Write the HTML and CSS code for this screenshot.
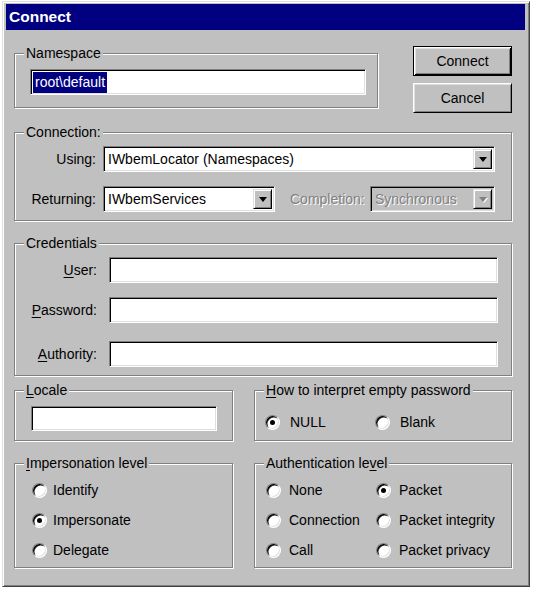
FILE: index.html
```html
<!DOCTYPE html>
<html>
<head>
<meta charset="utf-8">
<title>Connect</title>
<link rel="stylesheet" href="styles.css">
</head>
<body>
<div class="window">
  <div class="titlebar">Connect</div>
  <div class="content">
    <div class="row1">
      <div class="group ns">
        <div class="legend">Namespace</div>
        <div class="ns-body">
          <div class="textbox ns-box"><span class="sel">root\default</span></div>
        </div>
      </div>
      <div class="buttons">
        <div class="btn default">Connect</div>
        <div class="btn">Cancel</div>
      </div>
    </div>

    <div class="group conn">
      <div class="legend">Connection:</div>
      <div class="conn-body">
        <div class="frow">
          <span class="flabel">Using:</span>
          <div class="combo using"><span class="ctext">IWbemLocator (Namespaces)</span><span class="drop"><i class="arrow"></i></span></div>
        </div>
        <div class="frow">
          <span class="flabel">Returning:</span>
          <div class="combo returning"><span class="ctext">IWbemServices</span><span class="drop"><i class="arrow"></i></span></div>
          <span class="dislabel">Completion:</span>
          <div class="combo disabled completion"><span class="ctext">Synchronous</span><span class="drop"><i class="arrow"></i></span></div>
        </div>
      </div>
    </div>

    <div class="group cred">
      <div class="legend">Credentials</div>
      <div class="cred-body">
        <div class="frow r-user">
          <span class="clabel"><u>U</u>ser:</span>
          <div class="textbox cbox"></div>
        </div>
        <div class="frow r-pass">
          <span class="clabel"><u>P</u>assword:</span>
          <div class="textbox cbox"></div>
        </div>
        <div class="frow r-auth">
          <span class="clabel"><u>A</u>uthority:</span>
          <div class="textbox cbox"></div>
        </div>
      </div>
    </div>

    <div class="pair row4">
      <div class="group left">
        <div class="legend"><u>L</u>ocale</div>
        <div class="locale-body">
          <div class="textbox locale-box"></div>
        </div>
      </div>
      <div class="group right">
        <div class="legend"><u>H</u>ow to interpret empty password</div>
        <div class="how-body">
          <div class="radio"><span class="rb checked"></span><span>NULL</span></div>
          <div class="radio"><span class="rb"></span><span>Blank</span></div>
        </div>
      </div>
    </div>

    <div class="pair row5">
      <div class="group left">
        <div class="legend"><u>I</u>mpersonation level</div>
        <div class="imp-body">
          <div class="radio"><span class="rb"></span><span>Identify</span></div>
          <div class="radio"><span class="rb checked"></span><span>Impersonate</span></div>
          <div class="radio"><span class="rb"></span><span>Delegate</span></div>
        </div>
      </div>
      <div class="group right">
        <div class="legend">Authentication le<u>v</u>el</div>
        <div class="auth-body">
          <div class="radio"><span class="rb"></span><span>None</span></div>
          <div class="radio"><span class="rb checked"></span><span>Packet</span></div>
          <div class="radio"><span class="rb"></span><span>Connection</span></div>
          <div class="radio"><span class="rb"></span><span>Packet integrity</span></div>
          <div class="radio"><span class="rb"></span><span>Call</span></div>
          <div class="radio"><span class="rb"></span><span>Packet privacy</span></div>
        </div>
      </div>
    </div>
  </div>
</div>
</body>
</html>
```
FILE: styles.css
```css
* { box-sizing: border-box; }

body {
  margin: 0;
  background: #fff;
  font-family: "Liberation Sans", Arial, sans-serif;
  font-size: 14px;
  line-height: 16px;
  color: #000;
}

u { text-decoration: underline; text-underline-offset: 2px; }

.window {
  margin: 1px 0 0 2px;
  width: 528px;
  height: 586px;
  background: #c0c0c0;
  border: 1px solid;
  border-color: #dfdfdf #404040 #404040 #dfdfdf;
  box-shadow: inset 1px 1px 0 #fff, inset -1px -1px 0 #808080;
  padding: 2px 4px 0 3px;
}

.titlebar {
  height: 26px;
  line-height: 26px;
  background: #000080;
  color: #fff;
  font-weight: bold;
  font-size: 15.5px;
  padding-left: 3px;
}

.content {
  padding: 0 13px 0 8px;
}

/* group boxes (etched frame with caption) */
.group {
  border: 1px solid #808080;
  box-shadow: inset 1px 1px 0 #fff, 1px 1px 0 #fff;
}

.legend {
  width: fit-content;
  margin: -9px 0 0 9px;
  padding: 0 2px;
  height: 16px;
  line-height: 16px;
  background: #c0c0c0;
  white-space: nowrap;
}

/* sunken text box */
.textbox {
  background: #fff;
  border: 1px solid;
  border-color: #808080 #fff #fff #808080;
  box-shadow: inset 1px 1px 0 #000, inset -1px -1px 0 #dfdfdf;
}

/* row 1 */
.row1 {
  display: flex;
  align-items: flex-start;
  margin-top: 16px;
}

.ns {
  width: 364px;
  margin-top: 7px;
}

.ns-body {
  padding: 8px 0 12px 15px;
}

.ns-box {
  width: 336px;
  height: 26px;
  display: flex;
  align-items: center;
  padding-left: 2px;
}

.sel {
  background: #000080;
  color: #fff;
  line-height: 21px;
  height: 21px;
  padding: 0 2px;
}

.buttons {
  margin-left: auto;
  width: 99px;
  display: flex;
  flex-direction: column;
  gap: 7px;
}

.btn {
  height: 30px;
  display: flex;
  align-items: center;
  justify-content: center;
  background: #c0c0c0;
  border: 1px solid;
  border-color: #fff #000 #000 #fff;
  box-shadow: inset 1px 1px 0 #dfdfdf, inset -1px -1px 0 #808080;
}

.btn.default {
  border: 1px solid #000;
  box-shadow: inset 1px 1px 0 #fff, inset -1px -1px 0 #000, inset 2px 2px 0 #dfdfdf, inset -2px -2px 0 #808080;
}

/* connection */
.conn {
  margin-top: 19px;
}

.conn-body {
  padding: 6px 0 8px 0;
  display: flex;
  flex-direction: column;
  gap: 14px;
}

.frow {
  display: flex;
  align-items: center;
}

.flabel {
  width: 81px;
  text-align: right;
  margin-right: 7px;
  white-space: nowrap;
}

.combo {
  height: 26px;
  display: flex;
  align-items: center;
  background: #fff;
  border: 1px solid;
  border-color: #808080 #fff #fff #808080;
  box-shadow: inset 1px 1px 0 #000, inset -1px -1px 0 #dfdfdf;
  padding: 2px;
}

.ctext {
  flex: 1;
  padding-left: 2px;
  white-space: nowrap;
  overflow: hidden;
}

.drop {
  width: 19px;
  height: 100%;
  display: flex;
  align-items: center;
  justify-content: center;
  background: #c0c0c0;
  border: 1px solid;
  border-color: #dfdfdf #000 #000 #dfdfdf;
  box-shadow: inset 1px 1px 0 #fff, inset -1px -1px 0 #808080;
}

.arrow {
  display: block;
  width: 0;
  height: 0;
  border-left: 4px solid transparent;
  border-right: 4px solid transparent;
  border-top: 5px solid #000;
  margin-top: 1px;
}

.using { width: 392px; }
.returning { width: 172px; }
.completion { width: 125px; }

.dislabel {
  margin-left: 15px;
  width: 80px;
  color: #808080;
  text-shadow: 1px 1px 0 #fff;
  white-space: nowrap;
}

.combo.disabled {
  background: #c0c0c0;
}

.combo.disabled .ctext {
  color: #808080;
  text-shadow: 1px 1px 0 #fff;
}

.combo.disabled .arrow {
  border-top-color: #808080;
  filter: drop-shadow(1px 1px 0 #fff);
}

/* credentials */
.cred {
  margin-top: 22px;
}

.cred-body {
  padding: 6px 0 8px 0;
}

.clabel {
  width: 82px;
  text-align: right;
  margin-right: 12px;
  white-space: nowrap;
}

.cbox {
  width: 389px;
  height: 26px;
}

.r-pass { margin-top: 14px; }
.r-auth { margin-top: 18px; }

/* paired rows */
.pair {
  display: flex;
  gap: 21px;
}

.pair .left { width: 219px; }
.pair .right { width: 258px; }

.row4 { margin-top: 14px; }
.row5 { margin-top: 22px; }

.locale-body {
  padding: 8px 0 9px 16px;
}

.locale-box {
  width: 186px;
  height: 25px;
}

.how-body {
  margin-top: 12px;
  padding-left: 10px;
  display: grid;
  grid-template-columns: 110px 110px;
}

.how-body .radio { height: 24px; gap: 10px; }

.imp-body {
  padding: 4px 0 2px 17px;
}

.imp-body .radio { height: 30px; gap: 6px; }

.auth-body {
  padding: 4px 0 2px 11px;
  display: grid;
  grid-template-columns: 110px 136px;
}

.auth-body .radio { height: 30px; gap: 8px; }

.radio {
  display: flex;
  align-items: center;
  white-space: nowrap;
}

.rb {
  flex: none;
  width: 15px;
  height: 15px;
  border-radius: 50%;
  background: #fff;
  border: 1px solid;
  border-color: #808080 #fff #fff #808080;
  box-shadow: inset 1px 1px 0 #000, inset 1.5px 1.5px 0 #404040, inset -1px -1px 0 #dfdfdf;
  display: flex;
  align-items: center;
  justify-content: center;
}

.rb.checked::after {
  content: "";
  width: 5px;
  height: 5px;
  border-radius: 50%;
  background: #000;
}
```
